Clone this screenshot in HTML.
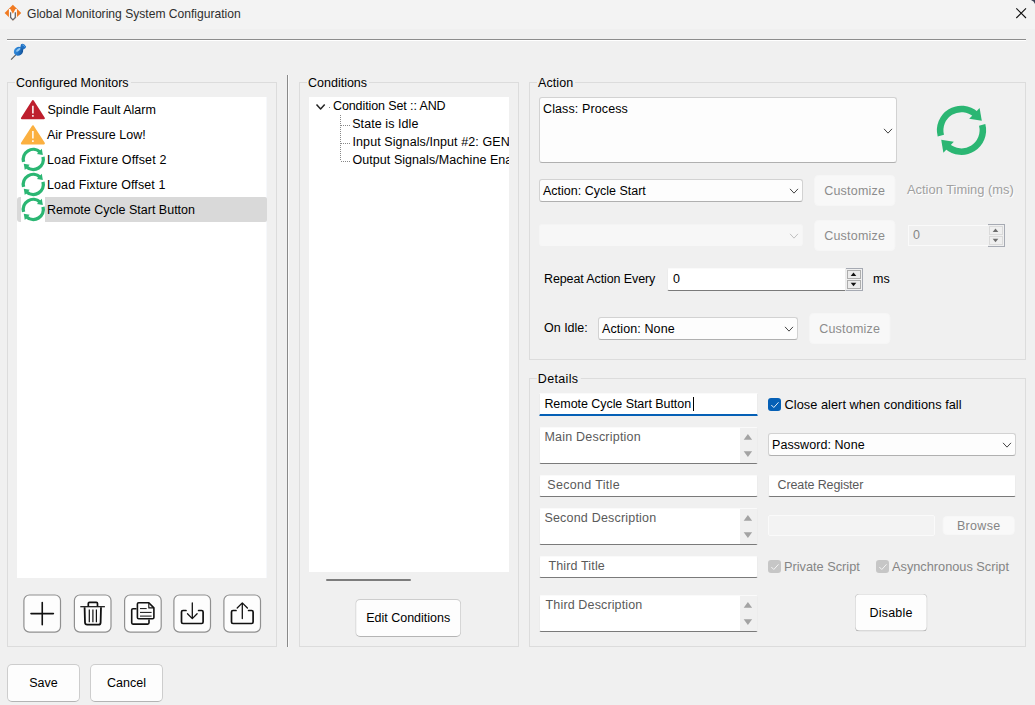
<!DOCTYPE html>
<html><head><meta charset="utf-8">
<style>
html,body{margin:0;padding:0}
body{width:1035px;height:705px;position:relative;overflow:hidden;background:#f0f0f0;font-family:"Liberation Sans",sans-serif;font-size:12.5px;color:#000;line-height:15px}
.a{position:absolute;box-sizing:border-box;white-space:nowrap}
.titlebar{left:0;top:0;width:1035px;height:29px;background:#f3f3f3}
.grp{border:1px solid #dcdcdc}
.lbl{background:#f0f0f0;padding:0 2px 0 1px;height:15px}
.white{background:#fff}
.btn{background:#fdfdfd;border:1px solid #cdcdcd;border-bottom-color:#b4b4b4;border-radius:5px;text-align:center}
.ibtn{background:#fdfdfd;border:1px solid #9a9a9a;border-radius:6px;width:38px;height:39px;top:594px}
.dis{color:#a0a0a0}
.dis2{color:#858585}
.cbtn{background:#f8f8f8;border:1px solid #f6f6f6;border-radius:4px;text-align:center;color:#8c8c8c;height:31px;line-height:30px}
.field{background:#fdfdfd;border:1px solid #d2d2d2;border-bottom:1px solid #b0b0b0;border-radius:3px}
.tf{background:#fff;border:1px solid #ececec;border-top-color:#fafafa;border-bottom:1px solid #7a7a7a;border-radius:2px}
.ph{color:#5a5a5a}
.spb{background:#efefef;border:1px solid #adadad;width:14px;height:9px}
</style></head><body>
<div class="a titlebar"></div>
<div class="a" style="left:27px;top:7px;font-size:12.1px;color:#2e2e2e" id="title">Global Monitoring System Configuration</div>
<div class="a" style="left:7px;top:39px;width:1019px;height:1px;background:#8c8c8c"></div><div class="a" style="left:7px;top:40px;width:1019px;height:1px;background:#fff"></div>

<!-- group 1 -->
<div class="a grp" style="left:7px;top:82px;width:270px;height:565px"></div>
<div class="a lbl" style="left:15px;top:76px" id="l1">Configured Monitors</div>
<div class="a white" style="left:17px;top:97px;width:249px;height:481px"></div><div class="a" style="left:266px;top:97px;width:1px;height:481px;background:#f6f8fb"></div>
<div class="a" style="left:17px;top:197px;width:249.5px;height:24.6px;background:#d9d9d9;border-radius:3px 2px 2px 3px"></div>
<div class="a white" style="left:21px;top:197px;width:24px;height:25px"></div>
<div class="a" style="left:47px;top:103px;transform:translate(0.5px,0px)">Spindle Fault Alarm</div>
<div class="a" style="left:47px;top:128px">Air Pressure Low!</div>
<div class="a" style="left:47px;top:153px;letter-spacing:0.145px">Load Fixture Offset 2</div>
<div class="a" style="left:47px;top:178px;letter-spacing:0.095px">Load Fixture Offset 1</div>
<div class="a" style="left:47px;top:203px">Remote Cycle Start Button</div>


<div class="a" style="left:287px;top:75px;width:1px;height:572px;background:#8a8a8a"></div><div class="a" style="left:288px;top:75px;width:1px;height:572px;background:#fbfbfb"></div>

<!-- group 2 -->
<div class="a grp" style="left:299px;top:82px;width:220px;height:565px"></div>
<div class="a lbl" style="left:307px;top:76px">Conditions</div>
<div class="a white" style="left:309px;top:97px;width:200px;height:475px;overflow:hidden">
 <div class="a" style="left:24px;top:2px;letter-spacing:-0.105px">Condition Set :: AND</div>
 <div class="a" style="left:43px;top:20px;letter-spacing:0.075px;transform:translate(0.2px,0px)">State is Idle</div>
 <div class="a" style="left:43px;top:38px;letter-spacing:0.085px;transform:translate(0.5px,0px)">Input Signals/Input #2: GEN</div>
 <div class="a" style="left:43px;top:56px;letter-spacing:0.054px;transform:translate(0.5px,0px)">Output Signals/Machine Ena</div>
</div>
<div class="a" style="left:326px;top:579px;width:85px;height:2px;background:#7c7c7c;border-radius:1px"></div>
<div class="a btn" style="left:356px;top:599px;width:106px;height:38px;line-height:36px;transform:translate(-0.8px,0px)">Edit Conditions</div>

<!-- group 3 -->
<div class="a grp" style="left:529px;top:82px;width:497px;height:278px"></div>
<div class="a lbl" style="left:537px;top:76px;letter-spacing:0.1px">Action</div>
<div class="a field" style="left:539px;top:97px;width:358px;height:66px"></div>
<div class="a" style="left:543px;top:102px;letter-spacing:0.115px">Class: Process</div>
<div class="a field" style="left:539px;top:179px;width:264px;height:23px"></div>
<div class="a" style="left:543px;top:184px">Action: Cycle Start</div>
<div class="a cbtn" style="left:815px;top:175px;width:81px;letter-spacing:0.225px;transform:translate(-0.8px,0px)">Customize</div>
<div class="a dis" style="left:907px;top:181.6px;font-size:12.9px;text-shadow:1px 1px 0 #fff">Action Timing (ms)</div>
<div class="a" style="left:539px;top:224px;width:264px;height:22px;background:#f7f7f7;border:1px solid #f5f5f5;border-top-color:#f4f4f4;border-bottom-color:#f7f7f7;border-radius:3px"></div>
<div class="a cbtn" style="left:815px;top:220px;width:81px;letter-spacing:0.225px;transform:translate(-0.8px,0px)">Customize</div>
<div class="a" style="left:908px;top:225px;width:81px;height:21px;background:#f0f0f0;border:1px solid #fafafa"></div>
<div class="a" style="left:988px;top:224px;width:17px;height:23px;border:1px solid #a6aab3;border-left:none;background:#f0f0f0"></div>
<div class="a spb" style="left:989px;top:226px;border-color:#dadada"></div>
<div class="a spb" style="left:989px;top:236px;border-color:#dadada"></div>
<div class="a dis2" style="left:913px;top:228px">0</div>
<div class="a" style="left:544px;top:272px;letter-spacing:-0.106px">Repeat Action Every</div>
<div class="a tf" style="left:667px;top:268px;width:179px;height:23px;border-radius:2px 0 0 2px"></div>
<div class="a" style="left:846px;top:268px;width:17px;height:23px;border:1px solid #a6aab3;border-left:none;background:#f0f0f0"></div>
<div class="a spb" style="left:847px;top:270px;background:#ececec"></div>
<div class="a spb" style="left:847px;top:280px;background:#ececec"></div>
<div class="a" style="left:673px;top:272px">0</div>
<div class="a" style="left:873px;top:272px">ms</div>
<div class="a" style="left:544px;top:321px">On Idle:</div>
<div class="a field" style="left:598px;top:317px;width:200px;height:23px"></div>
<div class="a" style="left:602px;top:322px;letter-spacing:0.1px">Action: None</div>
<div class="a cbtn" style="left:810px;top:313px;width:81px;letter-spacing:0.225px;transform:translate(-0.8px,0px)">Customize</div>

<!-- group 4 -->
<div class="a grp" style="left:529px;top:378px;width:497px;height:269px"></div>
<div class="a lbl" style="left:537px;top:372px;letter-spacing:0.35px;transform:translate(-0.2px,0px)">Details</div>

<div class="a white" style="left:539px;top:393px;width:219px;height:23px;border:1px solid #ececec;border-top-color:#fafafa;border-bottom:2px solid #0560b6;border-radius:1px"></div>
<div class="a" style="left:545px;top:397px;letter-spacing:-0.054px;transform:translate(-0.6px,0px)">Remote Cycle Start Button</div>
<div class="a" style="left:693px;top:397px;width:1px;height:14px;background:#000" id="caret"></div>
<div class="a tf" style="left:539px;top:427px;width:219px;height:37px"></div>
<div class="a" style="left:740px;top:428px;width:17px;height:35px;background:#f0f0f0"></div>
<div class="a ph" style="left:545px;top:430px;letter-spacing:0.213px;transform:translate(-0.6px,0px)">Main Description</div>
<div class="a tf" style="left:539px;top:475px;width:219px;height:22px"></div>
<div class="a ph" style="left:548px;top:478px;letter-spacing:0.318px;transform:translate(-0.7px,0px)">Second Title</div>
<div class="a tf" style="left:539px;top:508px;width:219px;height:37px"></div>
<div class="a" style="left:740px;top:509px;width:17px;height:35px;background:#f0f0f0"></div>
<div class="a ph" style="left:545px;top:511px;letter-spacing:0.2px;transform:translate(-0.6px,0px)">Second Description</div>
<div class="a tf" style="left:539px;top:556px;width:219px;height:22px"></div>
<div class="a ph" style="left:548px;top:559px;letter-spacing:0.15px;transform:translate(0.4px,0px)">Third Title</div>
<div class="a tf" style="left:539px;top:595px;width:219px;height:37px"></div>
<div class="a" style="left:740px;top:596px;width:17px;height:35px;background:#f0f0f0"></div>
<div class="a ph" style="left:545px;top:598px;letter-spacing:0.137px;transform:translate(0.6px,0px)">Third Description</div>
<div class="a" style="left:768px;top:398px;width:13px;height:13px;background:#0560b6;border-radius:3px"></div>
<div class="a" style="left:784px;top:397px;font-size:12.75px;letter-spacing:0.039px;transform:translate(0.6px,0px)">Close alert when conditions fall</div>
<div class="a field" style="left:768px;top:433px;width:248px;height:23px"></div>
<div class="a" style="left:772px;top:437px;letter-spacing:0.069px;transform:translate(0px,0.6px)">Password: None</div>
<div class="a tf" style="left:768px;top:475px;width:248px;height:22px"></div>
<div class="a ph" style="left:777px;top:478px;letter-spacing:-0.129px;transform:translate(0.6px,0px)">Create Register</div>
<div class="a" style="left:768px;top:515px;width:167px;height:21px;background:#f3f3f3;border:1px solid #fafafa;border-radius:2px"></div>
<div class="a btn dis2" style="left:943px;top:516px;width:72px;height:19px;line-height:18px;background:#f9f9f9;border-color:#f7f7f7;border-radius:4px;letter-spacing:0.3px;transform:translate(-0.3px,0px)">Browse</div>
<div class="a" style="left:768px;top:560px;width:13px;height:13px;background:#c6c6c6;border-radius:3px"></div>
<div class="a dis2" style="left:784px;top:559px;font-size:12.75px">Private Script</div>
<div class="a" style="left:876px;top:560px;width:13px;height:13px;background:#c6c6c6;border-radius:3px"></div>
<div class="a dis2" style="left:892px;top:559px;font-size:12.75px">Asynchronous Script</div>
<div class="a btn" style="left:855px;top:594px;width:73px;height:38px;line-height:36px;letter-spacing:0.217px;transform:translate(-0.4px,-0.4px)">Disable</div>

<!-- bottom -->
<div class="a btn" style="left:7px;top:664px;width:73px;height:38px;line-height:36px">Save</div>
<div class="a btn" style="left:90px;top:664px;width:73px;height:38px;line-height:36px">Cancel</div>
<svg class="a" style="left:0;top:0;pointer-events:none" width="1035" height="705" viewBox="0 0 1035 705"><g transform="translate(20.6 99.8)"><path d="M12.3 1.2L23.3 18.4H1.3Z" fill="#be1e2d" stroke="#be1e2d" stroke-width="2" stroke-linejoin="round"/><path d="M12.3 5.9V13.6M12.3 15.3V16.9" stroke="#fff" stroke-width="1.5"/></g><g transform="translate(20.6 125)"><path d="M12.3 1.2L23.3 18.4H1.3Z" fill="#fbb040" stroke="#fbb040" stroke-width="2" stroke-linejoin="round"/><path d="M12.3 5.9V13.6M12.3 15.3V16.9" stroke="#fff" stroke-width="1.5"/></g><g transform="translate(33.3 159.4) scale(0.47)"><g fill="none" stroke="#2bb673" stroke-width="7.2"><path d="M-20.66 5.38A21.35 21.35 0 0 1 14.2 -15.94"/><path d="M20.66 -5.38A21.35 21.35 0 0 1 -14.2 15.94"/></g><g fill="#2bb673"><path d="M18.1 -22.4L20.3 -9.5L7.7 -11.5Z"/><path d="M-18.1 22.4L-20.3 9.5L-7.7 11.5Z"/></g></g><g transform="translate(33.3 184.4) scale(0.47)"><g fill="none" stroke="#2bb673" stroke-width="7.2"><path d="M-20.66 5.38A21.35 21.35 0 0 1 14.2 -15.94"/><path d="M20.66 -5.38A21.35 21.35 0 0 1 -14.2 15.94"/></g><g fill="#2bb673"><path d="M18.1 -22.4L20.3 -9.5L7.7 -11.5Z"/><path d="M-18.1 22.4L-20.3 9.5L-7.7 11.5Z"/></g></g><g transform="translate(33.3 209.4) scale(0.47)"><g fill="none" stroke="#2bb673" stroke-width="7.2"><path d="M-20.66 5.38A21.35 21.35 0 0 1 14.2 -15.94"/><path d="M20.66 -5.38A21.35 21.35 0 0 1 -14.2 15.94"/></g><g fill="#2bb673"><path d="M18.1 -22.4L20.3 -9.5L7.7 -11.5Z"/><path d="M-18.1 22.4L-20.3 9.5L-7.7 11.5Z"/></g></g><g transform="translate(961.5 130.3)"><g fill="none" stroke="#2bb673" stroke-width="6.5"><path d="M-20.66 5.38A21.35 21.35 0 0 1 14.2 -15.94"/><path d="M20.66 -5.38A21.35 21.35 0 0 1 -14.2 15.94"/></g><g fill="#2bb673"><path d="M18.1 -22.4L20.3 -9.5L7.7 -11.5Z"/><path d="M-18.1 22.4L-20.3 9.5L-7.7 11.5Z"/></g></g><path d="M316.5 104.6L320.6 109.0L324.70000000000005 104.6" fill="none" stroke="#222" stroke-width="1.5" stroke-linejoin="round"/><path d="M340.5 115V161M341 125.5H350M341 143.5H350M341 161.5H350" stroke="#888" stroke-width="1" stroke-dasharray="1 1" fill="none"/><rect x="329" y="107" width="1" height="1" fill="#888"/><path d="M884.0 128.85L888 133.15L892.0 128.85" fill="none" stroke="#444" stroke-width="1.0" stroke-linejoin="round"/><path d="M790.0 188.85L794 193.15L798.0 188.85" fill="none" stroke="#444" stroke-width="1.0" stroke-linejoin="round"/><path d="M790.0 233.85L794 238.15L798.0 233.85" fill="none" stroke="#c0c0c0" stroke-width="1.0" stroke-linejoin="round"/><path d="M785.0 326.85L789 331.15L793.0 326.85" fill="none" stroke="#444" stroke-width="1.0" stroke-linejoin="round"/><path d="M1003.0 442.85L1007 447.15L1011.0 442.85" fill="none" stroke="#444" stroke-width="1.0" stroke-linejoin="round"/><path d="M743.6999999999999 439.7L747.9 433.90000000000003L752.1 439.7Z" fill="#a3a3a3"/><path d="M743.6999999999999 451.20000000000005L747.9 457.0L752.1 451.20000000000005Z" fill="#a3a3a3"/><path d="M743.6999999999999 520.6999999999999L747.9 514.9L752.1 520.6999999999999Z" fill="#a3a3a3"/><path d="M743.6999999999999 532.1999999999999L747.9 537.9999999999999L752.1 532.1999999999999Z" fill="#a3a3a3"/><path d="M743.6999999999999 607.6999999999999L747.9 601.9L752.1 607.6999999999999Z" fill="#a3a3a3"/><path d="M743.6999999999999 619.1999999999999L747.9 624.9999999999999L752.1 619.1999999999999Z" fill="#a3a3a3"/><path d="M850.7 276.0L853.5 272.6L856.3 276.0Z" fill="#111"/><path d="M850.7 282.8L853.5 286.2L856.3 282.8Z" fill="#111"/><path d="M992.7 232.0L995.5 228.60000000000002L998.3 232.0Z" fill="#6d6d6d"/><path d="M992.7 238.8L995.5 242.2L998.3 238.8Z" fill="#6d6d6d"/><path d="M1035 0V4A6 6 0 0 0 1031 0Z" fill="#3a4054"/><path d="M1016.3 8.3L1026 18M1026 8.3L1016.3 18" stroke="#111" stroke-width="1.1" fill="none"/><path d="M12.9 4.7L21.2 12.9L12.9 21.1L4.6 12.9Z" fill="#f07a22"/><path d="M8.9 9.1H10.3L12.9 13.8L15.5 9.1H16.9V17.3L12.9 21.3L8.9 17.3Z" fill="#fbfbfb"/><path d="M10.6 12.2V17.5L12.9 19.9L15.3 17.5V12.2" stroke="#63666c" stroke-width="1.3" fill="none"/><defs><linearGradient id="pg" x1="0" y1="0" x2="1" y2="1"><stop offset="0" stop-color="#3d97e6"/><stop offset="0.55" stop-color="#2173c4"/><stop offset="1" stop-color="#0b3f7e"/></linearGradient></defs><path d="M11.1 59.7L16.2 54.4" stroke="#5e5e5e" stroke-width="1.2"/><path d="M20.2 47.8L21 44.2Q22.6 43.4 24.2 44.4L26.1 46.4Q25.8 48 24.6 48.8L22.6 50Z" fill="#1f6fc2"/><ellipse cx="18.5" cy="51.3" rx="4.9" ry="4.2" transform="rotate(-35 18.5 51.3)" fill="url(#pg)"/><ellipse cx="18.3" cy="49.9" rx="2.6" ry="1.1" transform="rotate(-38 18.3 49.9)" fill="#a6d8fb" opacity="0.85"/><path d="M22.3 44.9Q24 45.2 25 46.9" stroke="#5fb0ee" stroke-width="0.9" fill="none"/><rect x="23.900000000000002" y="595" width="36.6" height="37.1" rx="5.5" fill="#fdfdfd" stroke="#909090" stroke-width="1.2"/><rect x="74.39999999999999" y="595" width="36.6" height="37.1" rx="5.5" fill="#fdfdfd" stroke="#909090" stroke-width="1.2"/><rect x="124.6" y="595" width="36.6" height="37.1" rx="5.5" fill="#fdfdfd" stroke="#909090" stroke-width="1.2"/><rect x="173.9" y="595" width="36.6" height="37.1" rx="5.5" fill="#fdfdfd" stroke="#909090" stroke-width="1.2"/><rect x="223.9" y="595" width="36.6" height="37.1" rx="5.5" fill="#fdfdfd" stroke="#909090" stroke-width="1.2"/><path d="M31 613.6H53.4M42.25 602.5V624.7" stroke="#111" stroke-width="1.6" stroke-linecap="round" fill="none"/><g stroke="#111" fill="none" stroke-linejoin="round"><path d="M80.3 606.7H104.9" stroke-width="1.2"/><path d="M88.3 606.5V603.6Q88.3 602.4 89.5 602.4H96.3Q97.5 602.4 97.5 603.6V606.5" stroke-width="1.7"/><path d="M84.6 607.3L85 622.6Q85.1 624.7 87.2 624.7H98.4Q100.5 624.7 100.6 622.6L101 607.3" stroke-width="1.8"/><path d="M89.3 609.5V622.3M92.9 609.5V622.3M96.4 609.5V622.3" stroke-width="1.2"/></g><g stroke="#111" fill="none" stroke-width="1.6" stroke-linejoin="round"><path d="M136.5 608.7H133Q131.7 608.7 131.7 610V622.8Q131.7 624.1 133 624.1H147.7Q149 624.1 149 622.8V619.5"/><path d="M138.7 602.8H148.8L153.9 607.9V617.5Q153.9 618.8 152.6 618.8H138.7Q137.4 618.8 137.4 617.5V604.1Q137.4 602.8 138.7 602.8Z"/><path d="M148.8 602.8V607.9H153.9" stroke-width="1.1"/><path d="M140 608.6H146.7M140 612.4H151.6M140 616.1H151.6" stroke-width="1"/></g><g stroke="#111" fill="none" stroke-width="1.7" stroke-linejoin="round" stroke-linecap="round"><path d="M186 610.5H183Q181.5 610.5 181.5 612V622Q181.5 623.5 183 623.5H201.6Q203.1 623.5 203.1 622V612Q203.1 610.5 201.6 610.5H198.6"/><path d="M192.3 603V618.3M187.5 613.8L192.3 618.6L197.1 613.8" stroke-width="1.3"/></g><g stroke="#111" fill="none" stroke-width="1.7" stroke-linejoin="round" stroke-linecap="round"><path d="M236 610.5H233Q231.5 610.5 231.5 612V622Q231.5 623.5 233 623.5H251.6Q253.1 623.5 253.1 622V612Q253.1 610.5 251.6 610.5H248.6"/><path d="M242.3 618.5V603M237.2 608L242.3 602.9L247.4 608" stroke-width="1.3"/></g><path d="M771.3 405L773.8 407.5L778.5 402.3" stroke="#eef4fb" stroke-width="0.95" fill="none"/><path d="M771.3 567L773.8 569.5L778.5 564.3" stroke="#f4f4f4" stroke-width="1" fill="none"/><path d="M879.3 567L881.8 569.5L886.5 564.3" stroke="#f4f4f4" stroke-width="1" fill="none"/></svg>
</body></html>
